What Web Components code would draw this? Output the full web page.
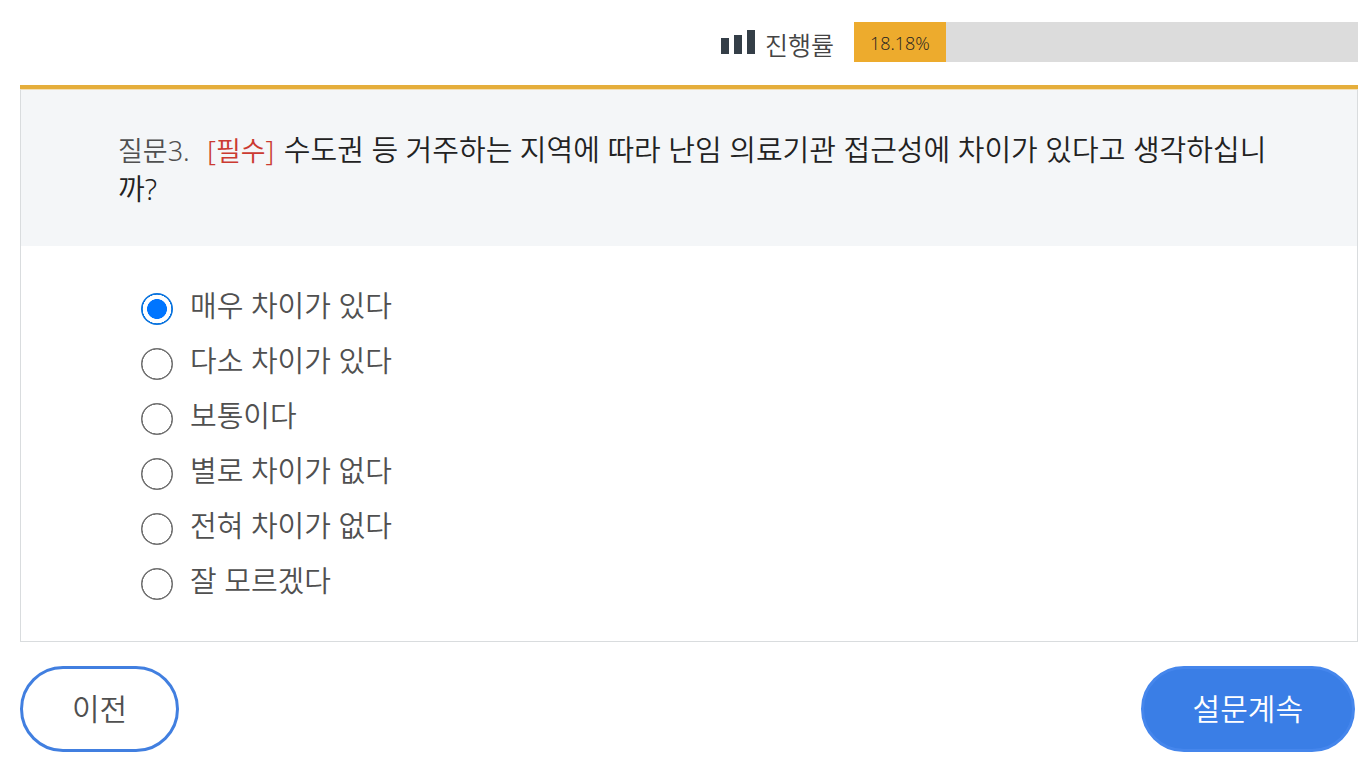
<!DOCTYPE html>
<html lang="ko">
<head>
<meta charset="utf-8">
<meta name="viewport" content="width=device-width, initial-scale=1">
<title>설문조사</title>
<style>
  body {
    margin: 0;
    background: #fff;
    color: #505050;
    font-family: "Noto Sans", "Noto Sans CJK KR", sans-serif;
    font-size: 29px;
    font-weight: 350;
    line-height: 38px;
  }
</style>
</head>
<body>
<survey-page>
  <survey-progress slot="progress" value="18.18">진행률</survey-progress>
  <survey-question number="질문3." required-label="[필수]">
    수도권 등 거주하는 지역에 따라 난임 의료기관 접근성에 차이가 있다고 생각하십니까?
    <survey-options slot="answers" name="q3" selected="0"
      options="매우 차이가 있다|다소 차이가 있다|보통이다|별로 차이가 없다|전혀 차이가 없다|잘 모르겠다"></survey-options>
  </survey-question>
  <survey-button slot="actions">이전</survey-button>
  <survey-button slot="actions" primary>설문계속</survey-button>
</survey-page>

<template id="page-template">
  <style>
    :host { display: block; padding: 22px 8px 28px 20px; }
    main { display: flex; flex-direction: column; }
    nav { display: flex; justify-content: space-between; padding: 24px 3px 0 0; }
  </style>
  <main>
    <slot name="progress"></slot>
    <slot></slot>
    <nav aria-label="설문 이동"><slot name="actions"></slot></nav>
  </main>
</template>

<template id="progress-template">
  <style>
    :host {
      display: grid;
      grid-template-columns: 21fr 13fr;
      column-gap: 20px;
      margin-bottom: 23px;
    }
    .caption {
      display: flex;
      justify-content: flex-end;
      align-items: center;
      gap: 10px;
      height: 40px;
      font-size: 25px;
      line-height: 40px;
      color: #444;
    }
    .caption span { padding-top: 6px; }
    svg { display: block; width: 34px; height: 24px; fill: #343e47; }
    .track { height: 40px; background: #dcdcdc; }
    .fill {
      height: 100%;
      background: #edab2d;
      color: #222;
      font: 300 18px/42px "Open Sans", sans-serif;
      text-align: center;
    }
  </style>
  <div class="caption">
    <svg viewBox="0 0 34 24" aria-hidden="true">
      <path d="M0 8h8v16H0zM13 5h8v19h-8zM26 0h8v24h-8z"/>
    </svg>
    <span><slot></slot></span>
  </div>
  <div class="track" role="progressbar" aria-valuemin="0" aria-valuemax="100"><div class="fill"></div></div>
</template>

<template id="question-template">
  <style>
    :host { display: block; border-top: 4px solid #e5ae3b; }
    section { border: 1px solid #d9dcde; border-top-color: #f4dfb4; }
    h1 {
      margin: 0;
      padding: 41px 78px 38px 97px;
      background: #f4f6f8;
      color: #222;
      font: inherit;
    }
    .number, .required { font-size: 27px; }
    .number { color: #505050; margin-right: 10px; }
    .required { color: #cb3a31; margin-right: 2px; }
  </style>
  <section>
    <h1><span class="number"></span> <span class="required"></span> <slot></slot></h1>
    <slot name="answers"></slot>
  </section>
</template>

<template id="options-template">
  <style>
    :host { display: block; padding: 35px 24px 30px 120px; }
    fieldset { display: grid; justify-items: start; margin: 0; padding: 0; border: 0; }
    label { display: flex; align-items: center; gap: 17px; height: 55px; }
    input {
      appearance: none;
      flex: none;
      width: 32px;
      height: 32px;
      margin: 0;
      border-radius: 50%;
      background: radial-gradient(circle closest-side, #fff 89%, #707070 92%);
    }
    input:checked {
      background: radial-gradient(circle closest-side, #0075ff 60%, #fff 64%, #fff 88%, #0b74de 91%);
    }
    span { padding-bottom: 6px; }
  </style>
  <fieldset aria-label="답변"></fieldset>
</template>

<template id="button-template">
  <style>
    :host { display: block; }
    button {
      display: block;
      height: 86px;
      padding: 0 49px;
      border: 3px solid #417fe0;
      border-radius: 43px;
      background: #fff;
      color: #505050;
      font: inherit;
      font-size: 30px;
      cursor: pointer;
    }
    :host([primary]) button { background: #3a7ee6; border-color: #4586ec; color: #fff; }
  </style>
  <button type="button"><slot></slot></button>
</template>

<script>
  class SurveyElement extends HTMLElement {
    constructor() {
      super();
      const template = document.getElementById(this.constructor.template);
      this.attachShadow({ mode: "open" }).append(template.content.cloneNode(true));
    }
    find(selector) { return this.shadowRoot.querySelector(selector); }
  }

  class SurveyPage extends SurveyElement {
    static template = "page-template";
  }

  class SurveyProgress extends SurveyElement {
    static template = "progress-template";
    connectedCallback() {
      const value = this.getAttribute("value");
      this.find(".track").setAttribute("aria-valuenow", value);
      this.find(".track").setAttribute("aria-label", this.textContent.trim());
      this.find(".fill").style.width = value + "%";
      this.find(".fill").textContent = value + "%";
    }
  }

  class SurveyQuestion extends SurveyElement {
    static template = "question-template";
    connectedCallback() {
      this.find(".number").textContent = this.getAttribute("number");
      this.find(".required").textContent = this.getAttribute("required-label");
    }
  }

  class SurveyOptions extends SurveyElement {
    static template = "options-template";
    connectedCallback() {
      const rows = this.getAttribute("options").split("|").map((text, index) => {
        const label = document.createElement("label");
        const input = document.createElement("input");
        const caption = document.createElement("span");
        input.type = "radio";
        input.name = this.getAttribute("name");
        input.value = index;
        input.checked = index === Number(this.getAttribute("selected"));
        caption.textContent = text;
        label.append(input, caption);
        return label;
      });
      this.find("fieldset").replaceChildren(...rows);
    }
  }

  class SurveyButton extends SurveyElement {
    static template = "button-template";
  }

  customElements.define("survey-page", SurveyPage);
  customElements.define("survey-progress", SurveyProgress);
  customElements.define("survey-question", SurveyQuestion);
  customElements.define("survey-options", SurveyOptions);
  customElements.define("survey-button", SurveyButton);
</script>
</body>
</html>
